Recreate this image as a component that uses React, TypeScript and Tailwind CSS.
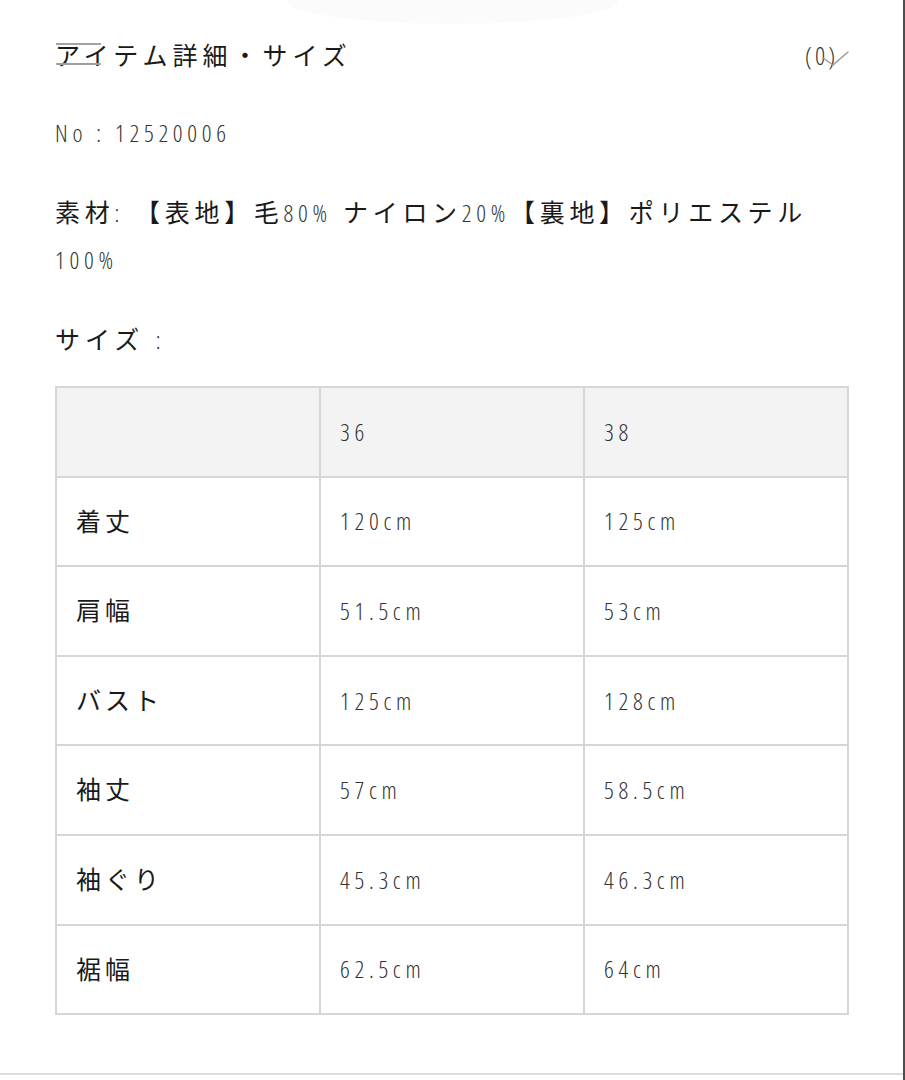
import React from "react";

const FONT = "font-['Open_Sans','Noto_Sans_CJK_JP',sans-serif]";

const rows: [string, string, string][] = [
  ["着丈", "120cm", "125cm"],
  ["肩幅", "51.5cm", "53cm"],
  ["バスト", "125cm", "128cm"],
  ["袖丈", "57cm", "58.5cm"],
  ["袖ぐり", "45.3cm", "46.3cm"],
  ["裾幅", "62.5cm", "64cm"],
];

function Cell({ children, head }: { children?: React.ReactNode; head?: boolean }) {
  return (
    <div
      className={`h-[87.6px] flex items-center px-[19px] ${head ? "bg-[#f3f3f3]" : "bg-white"}`}
    >
      {children}
    </div>
  );
}

function Num({ children }: { children: React.ReactNode }) {
  return (
    <span className="font-['Open_Sans',sans-serif] font-stretch-condensed font-light text-[24px] tracking-[4.7px] text-[#333]">
      {children}
    </span>
  );
}

export default function App() {
  return (
    <div
      className={`relative w-[905px] h-[1080px] overflow-hidden bg-white border-r-2 border-[#4d4d4d] ${FONT} text-[#1a1a1a]`}
    >
      {/* faint shape at top */}
      <div className="absolute left-[288px] top-[-22px] w-[330px] h-[46px] rounded-[50%] bg-[#fbfbfb]" />

      <div className="pl-[55px] pr-[54px] pt-[37px]">
        {/* title row */}
        <div className="relative flex items-center justify-between h-[36px]">
          <h1 className="text-[25px] tracking-[5px] leading-[36px] font-normal text-[#1a1a1a]">
            アイテム詳細・サイズ
          </h1>
          <div className="mr-[11px] font-stretch-condensed font-light text-[25px] tracking-[3px] text-[#333] leading-[36px]">
            (0)
          </div>
          <svg
            className="absolute left-[766px] top-[13px]"
            width="30"
            height="18"
            viewBox="0 0 30 18"
            fill="none"
          >
            <path
              d="M2 8 L12 15 L27 2"
              stroke="#9a9a9a"
              strokeWidth="1.5"
              strokeLinecap="round"
              strokeLinejoin="round"
            />
          </svg>
          {/* scribble marks over アイ */}
          <span className="absolute left-[1px] top-[6px] w-[45px] h-[2px] bg-[#a3a3a3]" />
          <span className="absolute left-[1px] top-[26px] w-[45px] h-[2px] bg-[#9c9c9c] rounded-full" />
        </div>

        {/* No */}
        <p className="mt-[42px] h-[36px] leading-[36px]">
          <Num>No : 12520006</Num>
        </p>

        {/* material */}
        <p className="mt-[38px] text-[25px] leading-[47px] tracking-[4.7px] text-[#1a1a1a]">
          素材<Num>:</Num> 【表地】毛<Num>80%</Num> ナイロン<Num>20%</Num>【裏地】ポリエステル
          <Num>100%</Num>
        </p>

        {/* size label */}
        <p className="mt-[38px] h-[36px] leading-[36px] text-[25px] tracking-[5px] text-[#1a1a1a]">
          サイズ <Num>:</Num>
        </p>

        {/* table */}
        <div className="mt-[29px] grid grid-cols-3 gap-[2px] p-[2px] bg-[#d6d6d6]">
          <Cell head />
          <Cell head>
            <Num>36</Num>
          </Cell>
          <Cell head>
            <Num>38</Num>
          </Cell>
          {rows.map(([label, a, b]) => (
            <React.Fragment key={label}>
              <Cell>
                <span className="text-[25px] tracking-[4px] text-[#1a1a1a]">{label}</span>
              </Cell>
              <Cell>
                <Num>{a}</Num>
              </Cell>
              <Cell>
                <Num>{b}</Num>
              </Cell>
            </React.Fragment>
          ))}
        </div>
      </div>

      {/* bottom divider */}
      <div className="absolute left-0 right-0 bottom-[5px] h-[2px] bg-[#dcdcdc]" />
    </div>
  );
}
